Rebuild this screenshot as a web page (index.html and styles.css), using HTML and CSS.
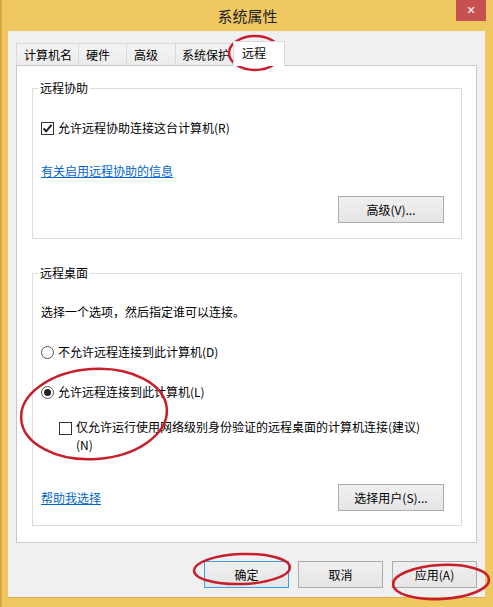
FILE: index.html
```html
<!DOCTYPE html>
<html lang="zh-CN">
<head>
    <meta charset="UTF-8">
    <meta name="viewport" content="width=device-width, initial-scale=1.0">
    <title>系统属性</title>
    <link rel="stylesheet" href="styles.css">
</head>
<body>
<div class="window">
    <div class="titlebar">
        <span class="title">系统属性</span>
        <button type="button" class="close">&#x2715;</button>
    </div>
    <div class="client">
        <div class="tabs">
            <div class="tab">计算机名</div>
            <div class="tab">硬件</div>
            <div class="tab">高级</div>
            <div class="tab">系统保护</div>
            <div class="tab active">远程</div>
        </div>
        <div class="panel">
            <fieldset class="group group-assist">
                <legend>远程协助</legend>
                <div class="row first">
                    <span class="check checked">
                        <svg width="11" height="11" viewBox="0 0 11 11"><path d="M1.5 5.5 L4.2 8.3 L9.5 1.8" fill="none" stroke="#222" stroke-width="2"/></svg>
                    </span>
                    <span>允许远程协助连接这台计算机(R)</span>
                </div>
                <div class="row link-row"><a href="#" class="link">有关启用远程协助的信息</a></div>
                <div class="btn-row">
                    <button type="button" class="btn wide">高级(V)...</button>
                </div>
            </fieldset>

            <fieldset class="group group-desktop">
                <legend>远程桌面</legend>
                <div class="row intro">选择一个选项，然后指定谁可以连接。</div>
                <div class="row option">
                    <span class="radio"></span>
                    <span>不允许远程连接到此计算机(D)</span>
                </div>
                <div class="row option">
                    <span class="radio selected"></span>
                    <span>允许远程连接到此计算机(L)</span>
                </div>
                <div class="row nla">
                    <span class="check"></span>
                    <span class="nla-text">仅允许运行使用网络级别身份验证的远程桌面的计算机连接(建议)<br>(N)</span>
                </div>
                <div class="btn-row split">
                    <a href="#" class="link">帮助我选择</a>
                    <button type="button" class="btn wide">选择用户(S)...</button>
                </div>
            </fieldset>
        </div>
        <div class="footer">
            <button type="button" class="btn default">确定</button>
            <button type="button" class="btn">取消</button>
            <button type="button" class="btn">应用(A)</button>
        </div>
    </div>

    <!-- 截图上的红圈标注 -->
    <svg class="marks" width="493" height="607" viewBox="0 0 493 607">
        <ellipse cx="255" cy="53" rx="26" ry="17"/>
        <ellipse cx="94" cy="414" rx="73" ry="45" transform="rotate(-4 94 414)"/>
        <ellipse cx="242" cy="569" rx="48" ry="15" transform="rotate(-2 242 569)"/>
        <ellipse cx="441" cy="582" rx="48" ry="17" transform="rotate(-3 441 582)"/>
    </svg>
</div>
</body>
</html>
```

FILE: styles.css
```css
* {
    box-sizing: border-box;
}

body {
    margin: 0;
    font-family: "Noto Sans CJK SC", "Liberation Sans", sans-serif;
    font-size: 12px;
    color: #000;
}

.window {
    position: relative;
    width: 493px;
    height: 607px;
    display: flex;
    flex-direction: column;
    background: #f0c862;
    border-left: 2px solid #d9a73c;
    padding: 0 8px 9px 6px;
}

.titlebar {
    position: relative;
    height: 31px;
    display: flex;
    align-items: center;
    justify-content: center;
}
.title {
    font-size: 15px;
    color: #222;
    margin-left: 2px;
}
.close {
    position: absolute;
    top: 0;
    right: -1px;
    width: 30px;
    height: 21px;
    border: 0;
    padding: 0;
    background: #c75050;
    color: #fff;
    font-size: 11px;
    font-weight: bold;
    font-family: "DejaVu Sans", sans-serif;
}

.client {
    flex: 1;
    display: flex;
    flex-direction: column;
    background: #f0f0f0;
    border-bottom: 1px solid #d8ad52;
    padding: 12px 8px 0 8px;
}

/* タブ */
.tabs {
    display: flex;
    align-items: flex-end;
    height: 22px;
}
.tab {
    height: 22px;
    padding: 0 0 0 7px;
    line-height: 21px;
    white-space: nowrap;
    border: 1px solid #d9d9d9;
    border-bottom: 0;
    border-right: 0;
    background: linear-gradient(#f4f4f4, #ececec);
}
.tab:nth-child(1) { width: 62px; }
.tab:nth-child(2) { width: 48px; }
.tab:nth-child(3) { width: 49px; }
.tab:nth-child(4) { width: 58px; padding-left: 6px; }
.tab.active {
    position: relative;
    z-index: 1;
    width: 52px;
    height: 25px;
    margin-bottom: -1px;
    padding-left: 8px;
    line-height: 22px;
    border-right: 1px solid #d9d9d9;
    background: #fff;
}

.panel {
    height: 478px;
    background: #fff;
    border: 1px solid #c9c9c9;
    padding: 14px 0 0 15px;
}

.group {
    width: 430px;
    margin: 0;
    padding: 0 8px;
    border: 1px solid #dcdcdc;
}
.group legend {
    padding: 0 2px;
    margin-left: -3px;
    line-height: 16px;
}
.group-assist {
    height: 159px;
}
.group-desktop {
    height: 261px;
    margin-top: 26px;
}

.row {
    display: flex;
    align-items: center;
    gap: 4px;
    line-height: 16px;
}
.row.first { margin-top: 24px; }
.row.link-row { margin-top: 27px; }
.row.intro { margin-top: 23px; }
.row.option { margin-top: 24px; }
.row.nla {
    margin-top: 19px;
    margin-left: 18px;
    align-items: flex-start;
    line-height: 18px;
}
.nla-text {
    margin-top: -1px;
}

.link {
    color: #0066cc;
    text-decoration: underline;
}

.check {
    width: 13px;
    height: 13px;
    flex: none;
    border: 1px solid #333;
    background: #fff;
    display: flex;
    align-items: center;
    justify-content: center;
}
.nla .check {
    margin-top: 3px;
}
.radio {
    width: 13px;
    height: 13px;
    flex: none;
    border: 1px solid #555;
    border-radius: 50%;
    background: #fff;
    display: flex;
    align-items: center;
    justify-content: center;
}
.radio.selected::after {
    content: "";
    width: 7px;
    height: 7px;
    border-radius: 50%;
    background: #222;
}

.btn-row {
    display: flex;
    justify-content: flex-end;
    align-items: center;
    margin-top: 17px;
    padding-right: 9px;
}
.btn-row.split {
    justify-content: space-between;
    margin-top: 30px;
}

.btn {
    width: 85px;
    height: 27px;
    padding: 0;
    font-family: inherit;
    font-size: 12px;
    color: #000;
    border: 1px solid #acacac;
    background: linear-gradient(#f0f0f0, #e5e5e5);
}
.btn.wide {
    width: 106px;
}
.btn.default {
    border-color: #3c9ce6;
}

.footer {
    display: flex;
    justify-content: flex-end;
    gap: 9px;
    padding-top: 18px;
}

.marks {
    position: absolute;
    top: 0;
    left: -2px;
    pointer-events: none;
}
.marks ellipse {
    fill: none;
    stroke: #c81f2b;
    stroke-width: 2.5;
}
```
